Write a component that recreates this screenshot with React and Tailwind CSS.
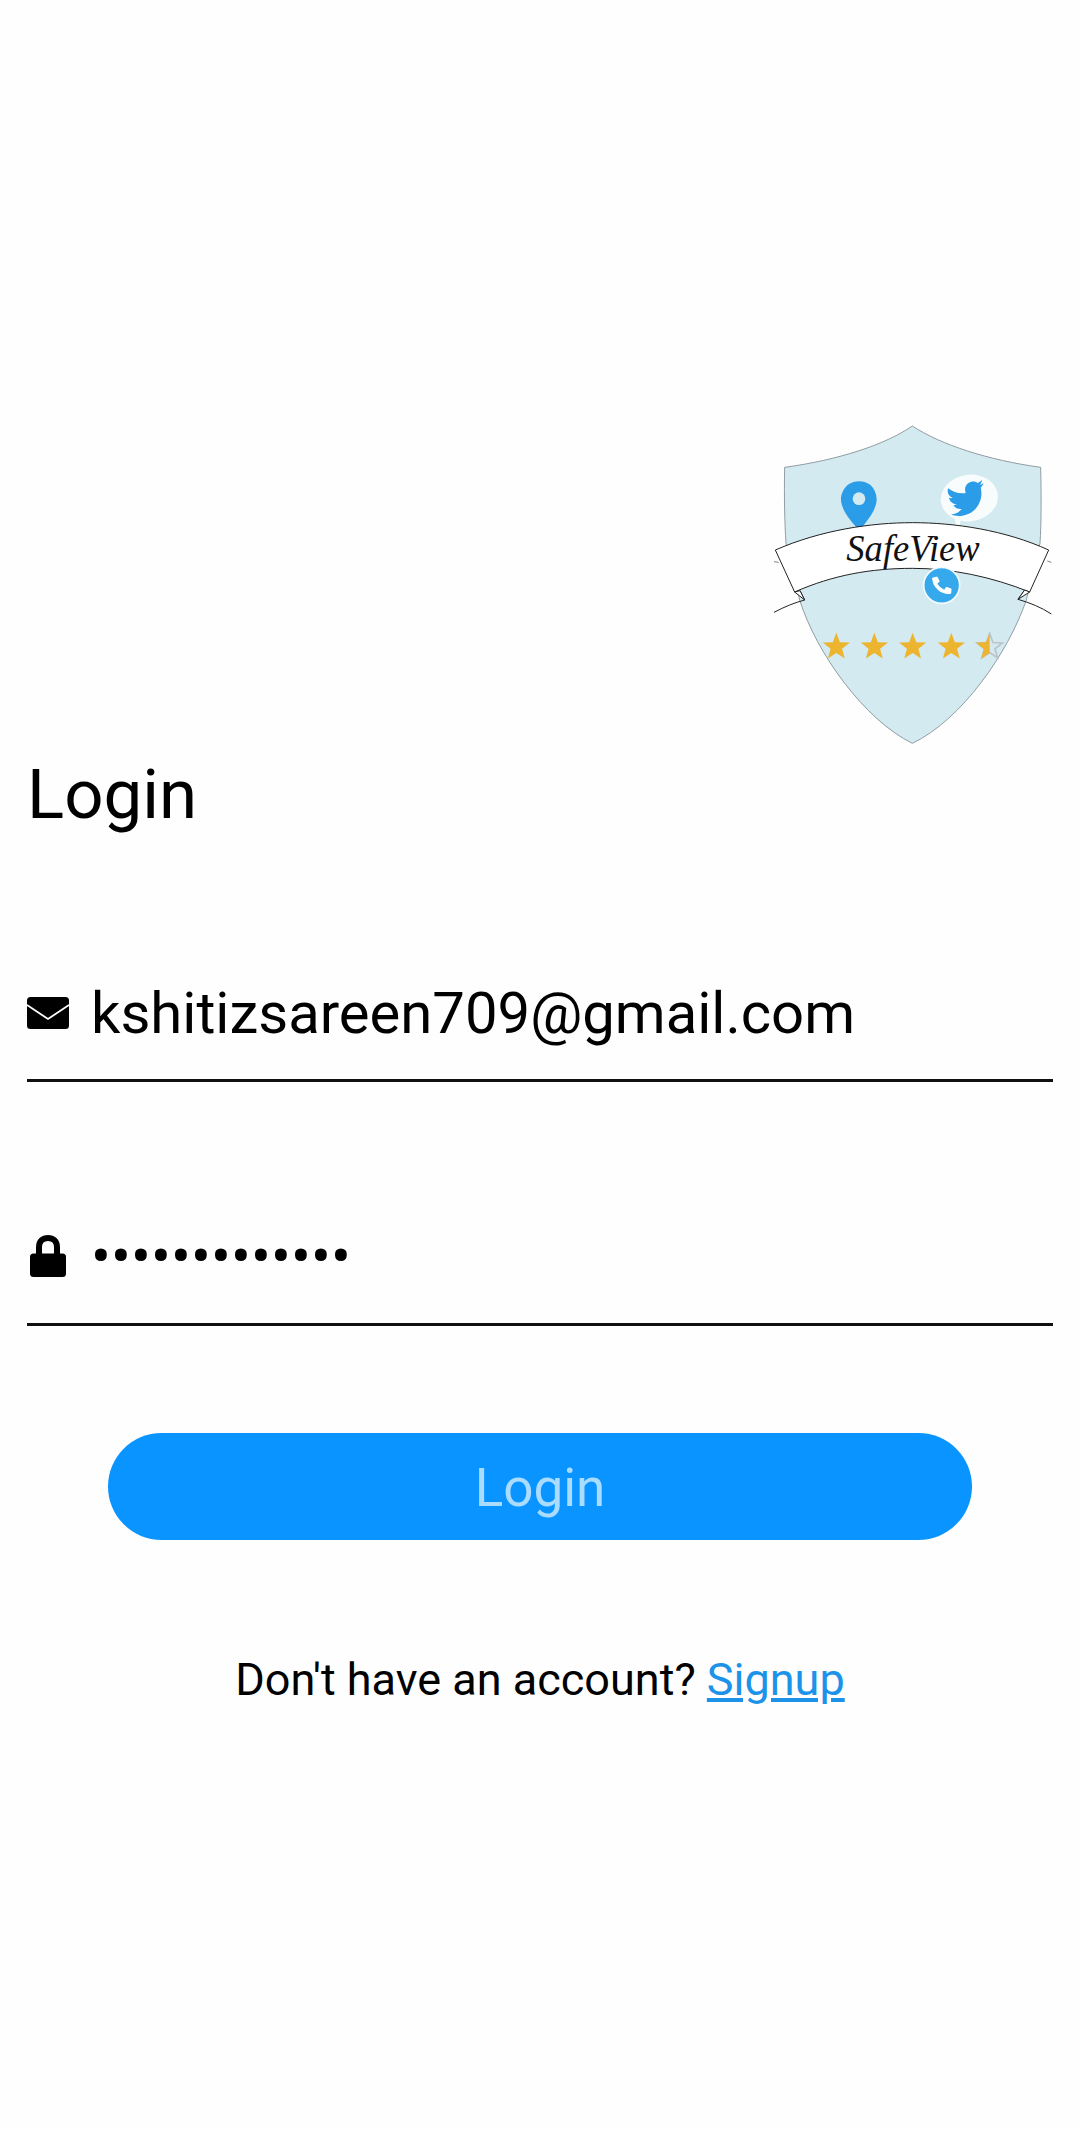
import { FaTwitter, FaPhoneAlt } from 'react-icons/fa'

const starPoints = (cx, cy, r) => {
  const pts = []
  for (let i = 0; i < 10; i++) {
    const rad = i % 2 === 0 ? r : r * 0.42
    const a = (Math.PI / 5) * i - Math.PI / 2
    pts.push(`${cx + rad * Math.cos(a)},${cy + rad * Math.sin(a)}`)
  }
  return pts.join(' ')
}

function Logo() {
  return (
    <svg viewBox="45 45 840 960" className="w-[280px] h-[320px] block">
      {/* shield */}
      <path
        d="M463 48 C380 105 240 150 80 172 C78 260 80 340 84 400 L125 570 C175 730 320 930 463 1000 C610 930 750 730 805 570 L846 400 C850 340 850 260 848 172 C690 150 550 105 463 48 Z"
        fill="#d3eaf1"
        stroke="#7f8c90"
        strokeWidth="2.5"
      />
      {/* pin */}
      <path
        d="M303 214 C345 214 356 250 356 268 C356 300 325 335 312 352 L296 352 C280 335 249 300 249 268 C249 250 262 214 303 214 Z"
        fill="#2b9ce8"
      />
      <circle cx="303" cy="266" r="19" fill="#d3eaf1" />
      {/* speech bubble */}
      <ellipse cx="634" cy="264" rx="86" ry="70" fill="#f8fcfd" transform="rotate(-8 634 264)" />
      <path d="M590 320 L610 320 L604 352 L594 352 Z" fill="#f8fcfd" />
      <g transform="rotate(-12 628 266)">
        <FaTwitter x="570" y="208" size={116} color="#2b9ce8" />
      </g>
      {/* ribbon tails */}
      <path d="M48 607 C80 590 110 578 140 570 L126 542" fill="none" stroke="#222" strokeWidth="3" />
      <path d="M880 612 C850 592 815 578 780 568 L800 540" fill="none" stroke="#222" strokeWidth="3" />
      <path d="M48 455 L62 457 M868 453 L880 457" stroke="#444" strokeWidth="2" />
      {/* ribbon */}
      <path
        d="M52 420 C190 360 340 338 463 338 C590 338 740 360 872 420 L815 546 C700 500 580 475 463 475 C340 475 225 495 110 546 Z"
        fill="#ffffff"
        stroke="#222"
        strokeWidth="3"
      />
      <path d="M110 546 L140 570 L126 542 Z M815 546 L780 568 L800 540 Z" fill="#ffffff" stroke="#222" strokeWidth="3" />
      <text
        x="265"
        y="452"
        textLength="400"
        lengthAdjust="spacingAndGlyphs"
        fontFamily="'Liberation Serif', serif"
        fontStyle="italic"
        fontSize="112"
        fill="#111"
      >
        SafeView
      </text>
      {/* phone */}
      <circle cx="551" cy="526" r="54" fill="#36a9ec" stroke="#f4fbfd" strokeWidth="5" />
      <g transform="rotate(-5 551 526)">
        <FaPhoneAlt x="524" y="498" size={56} color="#fff" />
      </g>
      {/* stars */}
      {[235, 349, 464, 580].map((cx) => (
        <polygon key={cx} points={starPoints(cx, 711, 43)} fill="#edb52f" />
      ))}
      <polygon points={starPoints(695, 711, 40)} fill="none" stroke="#bcc3c9" strokeWidth="5" />
      <path d="M695 668 L684.6 696 L654 698 L677.5 717 L669.7 746 L695 729 Z" fill="#edb52f" />
    </svg>
  )
}

function MailIcon() {
  return (
    <svg viewBox="0 0 42 32" className="w-[42px] h-[32px] shrink-0">
      <rect width="42" height="32" rx="3.5" fill="#000" />
      <path d="M0 8 L21 22 L42 8" fill="none" stroke="#fff" strokeWidth="1.8" />
    </svg>
  )
}

function LockIcon() {
  return (
    <svg viewBox="0 0 36 42" className="w-[36px] h-[42px] shrink-0">
      <path d="M9 20 V12 C9 6 13 3 18 3 C23 3 27 6 27 12 V20" fill="none" stroke="#000" strokeWidth="6" />
      <rect y="18.5" width="36" height="23.5" rx="3.5" fill="#000" />
    </svg>
  )
}

export default function App() {
  return (
    <div className="min-h-screen bg-[#fefefe] px-[27px] pt-[425px] font-['Roboto',sans-serif] text-black">
      <div className="flex justify-end">
        <Logo />
      </div>

      <h1 className="text-[69px] leading-[80px] mt-[10px] font-normal">Login</h1>

      <div className="mt-[142px] h-[105px] border-b-[3px] border-[#111] flex items-center gap-[22px] pb-[30px]">
        <MailIcon />
        <span className="text-[58px] leading-none">kshitizsareen709@gmail.com</span>
      </div>

      <div className="mt-[139px] h-[105px] border-b-[3px] border-[#111] flex items-center gap-[22px] pb-[32px]">
        <div className="w-[42px] flex justify-center">
          <LockIcon />
        </div>
        <span className="text-[59px] leading-none tracking-[0.1px]">•••••••••••••</span>
      </div>

      <div className="mt-[107px] flex justify-center">
        <button className="w-[864px] h-[107px] rounded-full bg-[#0a94ff] text-[#a9dcff] text-[53px] pt-[4px]">
          Login
        </button>
      </div>

      <p className="mt-[115px] text-center text-[45px] leading-[50px]">
        Don't have an account? <a className="text-[#1c93e8] underline">Signup</a>
      </p>
    </div>
  )
}
